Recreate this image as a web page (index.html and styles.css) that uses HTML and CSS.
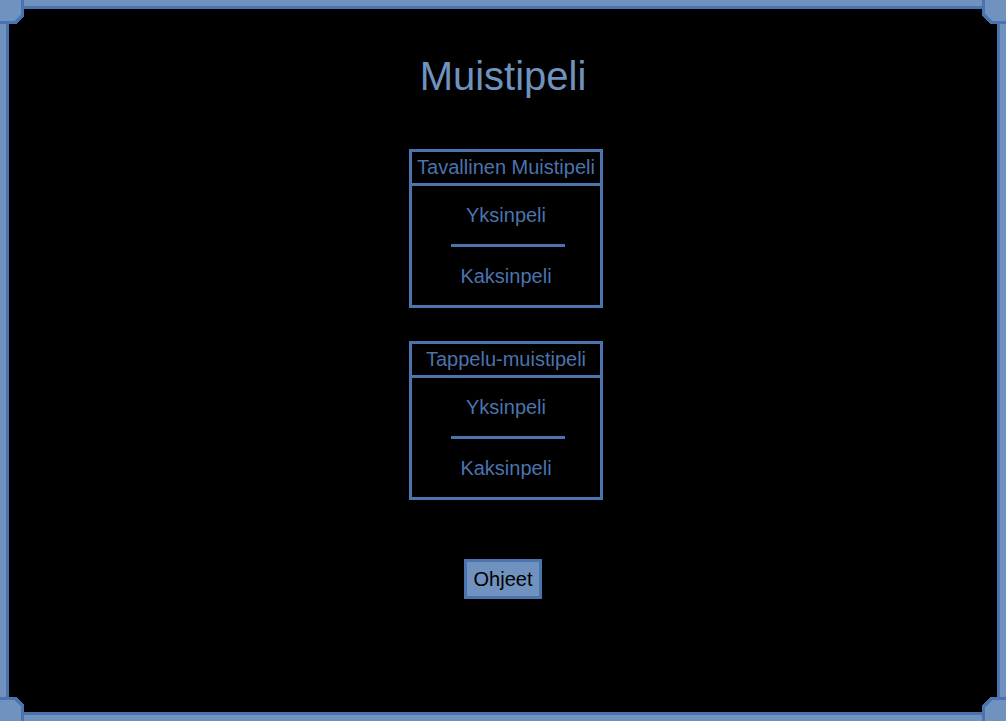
FILE: index.html
```html
<!DOCTYPE html>
<html lang="fi">
<head>
<meta charset="utf-8">
<meta name="viewport" content="width=device-width, initial-scale=1">
<title>Muistipeli</title>
<link rel="stylesheet" href="styles.css">
</head>
<body>
<div class="frame">
  <svg class="corner top-left" viewBox="0 0 24 24" aria-hidden="true"><path class="edge" d="M0 0H24V16L16 24H0Z"/><path class="face" d="M0 0H21V14L14 21H0Z"/></svg>
  <svg class="corner top-right" viewBox="0 0 24 24" aria-hidden="true"><path class="edge" d="M0 0H24V16L16 24H0Z"/><path class="face" d="M0 0H21V14L14 21H0Z"/></svg>
  <svg class="corner bottom-left" viewBox="0 0 24 24" aria-hidden="true"><path class="edge" d="M0 0H24V16L16 24H0Z"/><path class="face" d="M0 0H21V14L14 21H0Z"/></svg>
  <svg class="corner bottom-right" viewBox="0 0 24 24" aria-hidden="true"><path class="edge" d="M0 0H24V16L16 24H0Z"/><path class="face" d="M0 0H21V14L14 21H0Z"/></svg>
  <main class="screen">
    <h1 class="title">Muistipeli</h1>
    <div class="modes">
      <section class="mode">
        <h2 class="mode-name">Tavallinen Muistipeli</h2>
        <a class="choice" href="#yksin">Yksinpeli</a>
        <hr class="divider">
        <a class="choice" href="#kaksin">Kaksinpeli</a>
      </section>
      <section class="mode">
        <h2 class="mode-name">Tappelu-muistipeli</h2>
        <a class="choice" href="#tappelu-yksin">Yksinpeli</a>
        <hr class="divider">
        <a class="choice" href="#tappelu-kaksin">Kaksinpeli</a>
      </section>
    </div>
    <button class="help" type="button">Ohjeet</button>
  </main>
</div>
</body>
</html>
```

FILE: styles.css
```css
:root {
  --light: #7092be;
  --dark: #4b73ad;
}

* {
  box-sizing: border-box;
}

body {
  margin: 0;
  background: #000;
  color: var(--dark);
  font-family: "Liberation Sans", Arial, sans-serif;
  font-size: 20px;
  line-height: 24px;
}

.frame {
  position: relative;
  display: flex;
  min-height: 100vh;
  border: 6px solid var(--light);
}

.corner {
  position: absolute;
  width: 24px;
  height: 24px;
  shape-rendering: crispEdges;
}

.edge { fill: var(--dark); }
.face { fill: var(--light); }

.top-left { top: -6px; left: -6px; }
.top-right { top: -6px; right: -6px; transform: scaleX(-1); }
.bottom-left { bottom: -6px; left: -6px; transform: scaleY(-1); }
.bottom-right { bottom: -6px; right: -6px; transform: scale(-1, -1); }

.screen {
  flex: 1;
  display: flex;
  flex-direction: column;
  align-items: center;
  padding: 41px 16px;
  border: 3px solid var(--dark);
}

.title {
  margin: 0;
  color: var(--light);
  font-size: 40px;
  font-weight: 400;
  line-height: 52px;
}

.modes {
  display: flex;
  flex-direction: column;
  gap: 33px;
  margin-top: 47px;
  padding-left: 6px;
}

.mode {
  min-width: 194px;
  border: 3px solid var(--dark);
}

.mode-name {
  margin: 0;
  padding: 3px;
  border-bottom: 3px solid var(--dark);
  font-size: 20px;
  font-weight: 400;
  line-height: 25px;
  text-align: center;
  white-space: nowrap;
}

.choice {
  display: block;
  padding: 17px 0;
  color: inherit;
  text-align: center;
  text-decoration: none;
}

.divider {
  height: 3px;
  margin: 0 35px 0 39px;
  border: 0;
  background: var(--dark);
}

.help {
  margin-top: 59px;
  padding: 5px 7px;
  border: 3px solid var(--dark);
  background: var(--light);
  color: #000;
  font: inherit;
}
```
